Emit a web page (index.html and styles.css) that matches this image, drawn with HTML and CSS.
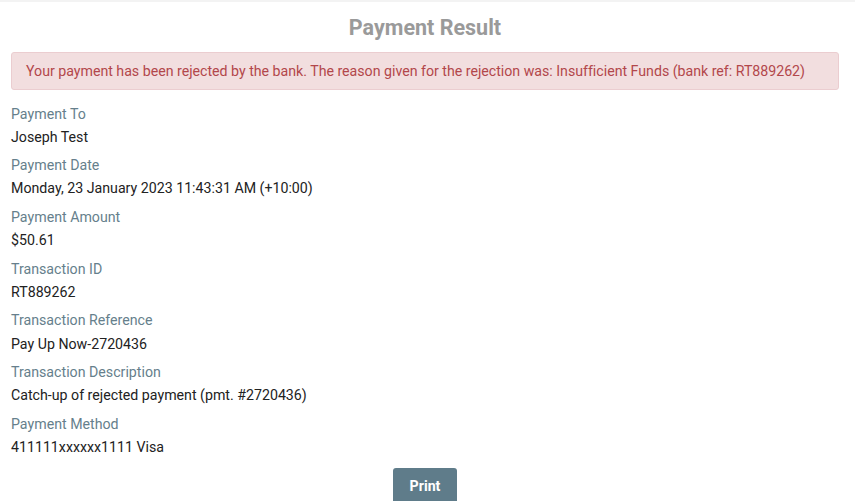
FILE: index.html
```html
<!DOCTYPE html>
<html lang="en">
<head>
<meta charset="utf-8">
<title>Payment Result</title>
<link rel="stylesheet" href="styles.css">
</head>
<body>
<div class="topbar"></div>
<main class="page">
  <h1 class="title">Payment Result</h1>
  <div class="alert">Your payment has been rejected by the bank. The reason given for the rejection was: Insufficient Funds (bank ref: RT889262)</div>
  <dl class="details">
    <div class="item"><dt>Payment To</dt><dd>Joseph Test</dd></div>
    <div class="item"><dt>Payment Date</dt><dd>Monday, 23 January 2023 11:43:31 AM (+10:00)</dd></div>
    <div class="item"><dt>Payment Amount</dt><dd>$50.61</dd></div>
    <div class="item"><dt>Transaction ID</dt><dd>RT889262</dd></div>
    <div class="item"><dt>Transaction Reference</dt><dd>Pay Up Now-2720436</dd></div>
    <div class="item"><dt>Transaction Description</dt><dd>Catch-up of rejected payment (pmt. #2720436)</dd></div>
    <div class="item"><dt>Payment Method</dt><dd>411111xxxxxx1111 Visa</dd></div>
  </dl>
  <div class="actions"><button class="btn-print" type="button">Print</button></div>
</main>
</body>
</html>
```
FILE: styles.css
```css
html, body {
  margin: 0;
  padding: 0;
  background: #ffffff;
  font-family: Roboto, "Liberation Sans", Arial, sans-serif;
  font-size: 14.2px;
  color: #222222;
  overflow: hidden;
}
.topbar {
  height: 2px;
  background: #f3f3f3;
}
.page {
  padding: 0 16px 0 11px;
}
.title {
  margin: 13px 0 0;
  text-align: center;
  font-size: 21.5px;
  font-weight: 700;
  color: #9a9a9a;
  line-height: 26px;
}
.alert {
  margin-top: 11px;
  background: #f2dedf;
  border: 1px solid #ebcdd0;
  border-radius: 3px;
  color: #b2474b;
  padding: 9px 14px;
  line-height: 18px;
  letter-spacing: -0.015px;
}
.details {
  margin: 14.5px 0 0;
}
.item {
  display: flex;
  flex-direction: column;
  gap: 5px;
  margin-bottom: 10.2px;
}
.item dt {
  color: #667f8c;
  line-height: 18.25px;
}
.item dd {
  margin: 0;
  line-height: 18.25px;
}
.actions {
  display: flex;
  justify-content: center;
  margin-top: 12px;
}
.btn-print {
  width: 64px;
  height: 36px;
  border: none;
  border-radius: 3px;
  background: #5f7c8a;
  color: #ffffff;
  font-family: Roboto, "Liberation Sans", Arial, sans-serif;
  font-size: 14.2px;
  font-weight: 700;
}
```
